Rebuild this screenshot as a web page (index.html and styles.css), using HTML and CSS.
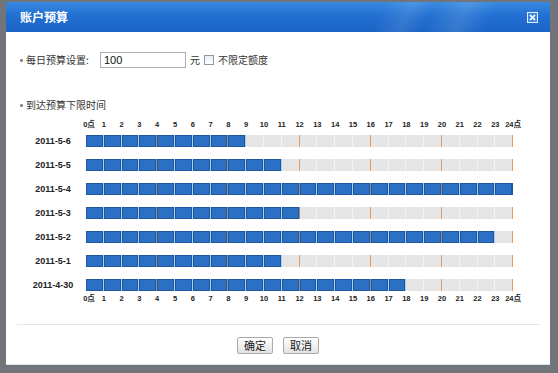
FILE: index.html
```html
<!DOCTYPE html>
<html lang="zh-CN">
<head>
<meta charset="utf-8">
<title>账户预算</title>
<link rel="stylesheet" href="styles.css">
</head>
<body>
<div class="frame">
  <div class="dialog">
    <div class="titlebar">
      <span class="title">账户预算</span>
      <svg class="close" width="11" height="11" viewBox="0 0 11 11"><rect x="0.5" y="0.5" width="10" height="10" fill="#3b87dd" stroke="#e4f0ff"/><path d="M3 3l5 5M8 3l-5 5" stroke="#fff" stroke-width="1.7"/></svg>
    </div>
    <div class="content">
      <div class="field">
        <span class="dot"></span><span class="lbl">每日预算设置:</span>
        <input class="input" type="text" value="100">
        <span class="unit">元</span>
        <span class="chk"></span>
        <span>不限定额度</span>
      </div>
      <div class="field section">
        <span class="dot"></span><span>到达预算下限时间</span>
      </div>
      <div class="chart">
        <div class="hours"><span class="sp"></span><div class="g"><span class="zero">0点</span><span>1</span><span>2</span><span>3</span><span>4</span><span>5</span><span>6</span><span>7</span><span>8</span><span>9</span><span>10</span><span>11</span><span>12</span><span>13</span><span>14</span><span>15</span><span>16</span><span>17</span><span>18</span><span>19</span><span>20</span><span>21</span><span>22</span><span>23</span><span>24点</span></div></div>
        <div class="row first"><span class="date">2011-5-6</span><div class="bar"><i class="f"></i><i class="f"></i><i class="f"></i><i class="f"></i><i class="f"></i><i class="f"></i><i class="f"></i><i class="f"></i><i class="f"></i><i></i><i></i><i></i><i></i><i></i><i></i><i></i><i></i><i></i><i></i><i></i><i></i><i></i><i></i><i></i></div></div>
        <div class="row"><span class="date">2011-5-5</span><div class="bar"><i class="f"></i><i class="f"></i><i class="f"></i><i class="f"></i><i class="f"></i><i class="f"></i><i class="f"></i><i class="f"></i><i class="f"></i><i class="f"></i><i class="f"></i><i></i><i></i><i></i><i></i><i></i><i></i><i></i><i></i><i></i><i></i><i></i><i></i><i></i></div></div>
        <div class="row"><span class="date">2011-5-4</span><div class="bar"><i class="f"></i><i class="f"></i><i class="f"></i><i class="f"></i><i class="f"></i><i class="f"></i><i class="f"></i><i class="f"></i><i class="f"></i><i class="f"></i><i class="f"></i><i class="f"></i><i class="f"></i><i class="f"></i><i class="f"></i><i class="f"></i><i class="f"></i><i class="f"></i><i class="f"></i><i class="f"></i><i class="f"></i><i class="f"></i><i class="f"></i><i class="f"></i></div></div>
        <div class="row"><span class="date">2011-5-3</span><div class="bar"><i class="f"></i><i class="f"></i><i class="f"></i><i class="f"></i><i class="f"></i><i class="f"></i><i class="f"></i><i class="f"></i><i class="f"></i><i class="f"></i><i class="f"></i><i class="f"></i><i></i><i></i><i></i><i></i><i></i><i></i><i></i><i></i><i></i><i></i><i></i><i></i></div></div>
        <div class="row"><span class="date">2011-5-2</span><div class="bar"><i class="f"></i><i class="f"></i><i class="f"></i><i class="f"></i><i class="f"></i><i class="f"></i><i class="f"></i><i class="f"></i><i class="f"></i><i class="f"></i><i class="f"></i><i class="f"></i><i class="f"></i><i class="f"></i><i class="f"></i><i class="f"></i><i class="f"></i><i class="f"></i><i class="f"></i><i class="f"></i><i class="f"></i><i class="f"></i><i class="f"></i><i></i></div></div>
        <div class="row"><span class="date">2011-5-1</span><div class="bar"><i class="f"></i><i class="f"></i><i class="f"></i><i class="f"></i><i class="f"></i><i class="f"></i><i class="f"></i><i class="f"></i><i class="f"></i><i class="f"></i><i class="f"></i><i></i><i></i><i></i><i></i><i></i><i></i><i></i><i></i><i></i><i></i><i></i><i></i><i></i></div></div>
        <div class="row"><span class="date">2011-4-30</span><div class="bar"><i class="f"></i><i class="f"></i><i class="f"></i><i class="f"></i><i class="f"></i><i class="f"></i><i class="f"></i><i class="f"></i><i class="f"></i><i class="f"></i><i class="f"></i><i class="f"></i><i class="f"></i><i class="f"></i><i class="f"></i><i class="f"></i><i class="f"></i><i class="f"></i><i></i><i></i><i></i><i></i><i></i><i></i></div></div>
        <div class="hours bottom"><span class="sp"></span><div class="g"><span class="zero">0点</span><span>1</span><span>2</span><span>3</span><span>4</span><span>5</span><span>6</span><span>7</span><span>8</span><span>9</span><span>10</span><span>11</span><span>12</span><span>13</span><span>14</span><span>15</span><span>16</span><span>17</span><span>18</span><span>19</span><span>20</span><span>21</span><span>22</span><span>23</span><span>24点</span></div></div>
      </div>
    </div>
    <div class="sep"></div>
    <div class="btns">
      <button class="btn">确定</button>
      <button class="btn">取消</button>
    </div>
  </div>
</div>
</body>
</html>
```

FILE: styles.css
```css
html, body {
  margin: 0;
  padding: 0;
}
body {
  font-family: "Noto Sans CJK SC", "Liberation Sans", sans-serif;
}
.frame {
  width: 558px;
  height: 373px;
  box-sizing: border-box;
  background: #717579;
  padding: 2px 8px 8px 6px;
}
.dialog {
  background: #fff;
  height: 363px;
  box-sizing: border-box;
  border-bottom: 1px solid #d6e4f4;
  display: flex;
  flex-direction: column;
}
.titlebar {
  height: 30px;
  flex: none;
  box-sizing: border-box;
  display: flex;
  align-items: center;
  justify-content: space-between;
  padding: 0 12px 0 14px;
  background:
    linear-gradient(115deg, transparent 68%, rgba(255,255,255,0.10) 73%, transparent 77%, rgba(255,255,255,0.12) 83%, transparent 88%),
    linear-gradient(#398ae1, #2270d2 45%, #1b64c6);
}
.title {
  color: #fff;
  font-weight: bold;
  font-size: 12px;
  line-height: 14px;
}
.close {
  display: block;
}
.content {
  padding: 20px 0 0 14px;
}
.field {
  display: flex;
  align-items: center;
  height: 16px;
  font-size: 10px;
  line-height: 12px;
  color: #333;
}
.dot {
  width: 3px;
  height: 3px;
  border-radius: 1px;
  background: #8c8c8c;
  margin-right: 3px;
  flex: none;
}
.lbl {
  width: 74px;
  flex: none;
}
.input {
  width: 86px;
  height: 16px;
  box-sizing: border-box;
  border: 1px solid #a7aeb8;
  font: 11px "Liberation Sans", sans-serif;
  color: #111;
  padding: 0 3px;
  margin: 0;
  outline: none;
}
.unit {
  margin-left: 4px;
}
.chk {
  width: 10px;
  height: 10px;
  box-sizing: border-box;
  border: 1px solid #8797a8;
  background: linear-gradient(#e9edf1, #fff);
  margin: 0 4px;
  flex: none;
}
.section {
  margin-top: 29px;
}
.chart {
  margin-top: 7px;
}
.hours {
  display: flex;
  height: 10px;
  font: bold 7.5px/10px "Liberation Sans", "Noto Sans CJK SC", sans-serif;
  color: #222;
}
.hours .sp {
  width: 66px;
  flex: none;
}
.hours .g {
  display: grid;
  grid-template-columns: repeat(25, 17.8px);
  margin-left: -8.9px;
  text-align: center;
}
.hours .zero {
  padding-left: 6px;
}
.hours.bottom {
  margin-top: 3px;
}
.row {
  display: flex;
  align-items: center;
  height: 12px;
  margin-top: 12px;
}
.row.first {
  margin-top: 5px;
}
.date {
  width: 66px;
  flex: none;
  text-align: center;
  font: bold 9px/12px "Liberation Sans", sans-serif;
  color: #222;
}
.bar {
  width: 427px;
  height: 12px;
  display: flex;
}
.bar i {
  flex: 1;
  box-sizing: border-box;
  background: #e5e5e5;
  border-right: 1px solid #f3f3f3;
}
.bar i:nth-child(4n) {
  border-right-color: #e89a5c;
}
.bar i.f {
  background: #2b70c5;
  box-shadow: inset 0 0 0 1px #1d589f;
  border-right-color: #b3cfee;
}
.bar i.f:nth-child(4n) {
  border-right-color: #a08e92;
}
.bar i.f:last-child {
  border-right-color: #1d589f;
}
.sep {
  height: 1px;
  background: #e6e6e6;
  margin: 20px 10px 0 11px;
}
.btns {
  display: flex;
  justify-content: center;
  gap: 10px;
  margin-top: 12px;
}
.btn {
  width: 36px;
  height: 17px;
  box-sizing: border-box;
  border: 1px solid #a9a9a9;
  border-radius: 2px;
  background: linear-gradient(#ffffff, #e3e3e3);
  font: 11px/15px "Noto Sans CJK SC", sans-serif;
  color: #222;
  padding: 0;
  margin: 0;
}
```
